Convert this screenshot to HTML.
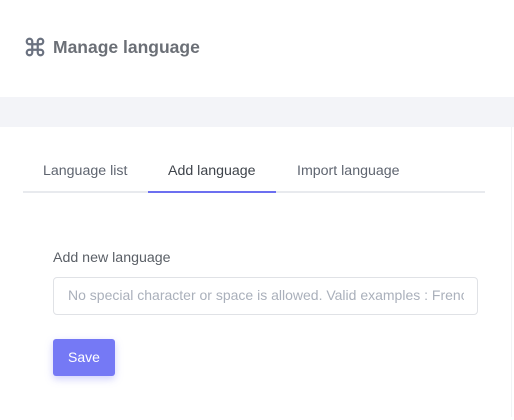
<!DOCTYPE html>
<html><head><style>
body{margin:0;width:514px;height:420px;background:#fff;font-family:"Liberation Sans",sans-serif;position:relative;overflow:hidden}
.a{position:absolute}
</style></head><body>
<div class="a" style="left:24px;top:36px;">
<svg width="22" height="22" viewBox="0 0 24 24" fill="none" stroke="#6b7280" stroke-width="2.4"><path d="M15 6v12a3 3 0 1 0 3-3H6a3 3 0 1 0 3 3V6a3 3 0 1 0-3 3h12a3 3 0 1 0-3-3"/></svg></div>
<div class="a" style="left:53px;top:37px;font-size:17.5px;font-weight:bold;color:#6b6f76">Manage language</div>
<div class="a" style="left:0;top:97px;width:514px;height:30px;background:#f3f4f8"></div>
<div class="a" style="left:511px;top:127px;width:1px;height:290px;background:#f2f3f5"></div>
<div class="a" style="left:43px;top:163px;font-size:14.2px;color:#5f6570">Language list</div>
<div class="a" style="left:168px;top:163px;font-size:14.2px;color:#3f444b">Add language</div>
<div class="a" style="left:297px;top:163px;font-size:14.2px;color:#5f6570">Import language</div>
<div class="a" style="left:23px;top:191px;width:462px;height:2px;background:#e8eaee"></div>
<div class="a" style="left:148px;top:191px;width:128px;height:2px;background:#6c6ff0"></div>
<div class="a" style="left:53px;top:250px;font-size:14.2px;color:#5a5f66">Add new language</div>
<div class="a" style="left:53px;top:277px;width:423px;height:36px;border:1px solid #e0e2e6;border-radius:4px"></div>
<div class="a" style="left:68px;top:287px;font-size:14px;color:#aab0bb;white-space:nowrap;width:396px;overflow:hidden">No special character or space is allowed. Valid examples : French</div>
<div class="a" style="left:53px;top:339px;width:62px;height:37px;background:#7579f5;border-radius:3px;box-shadow:0 3px 8px rgba(117,121,245,.35);color:#fff;font-size:14px;text-align:center;line-height:37px">Save</div>
</body></html>
